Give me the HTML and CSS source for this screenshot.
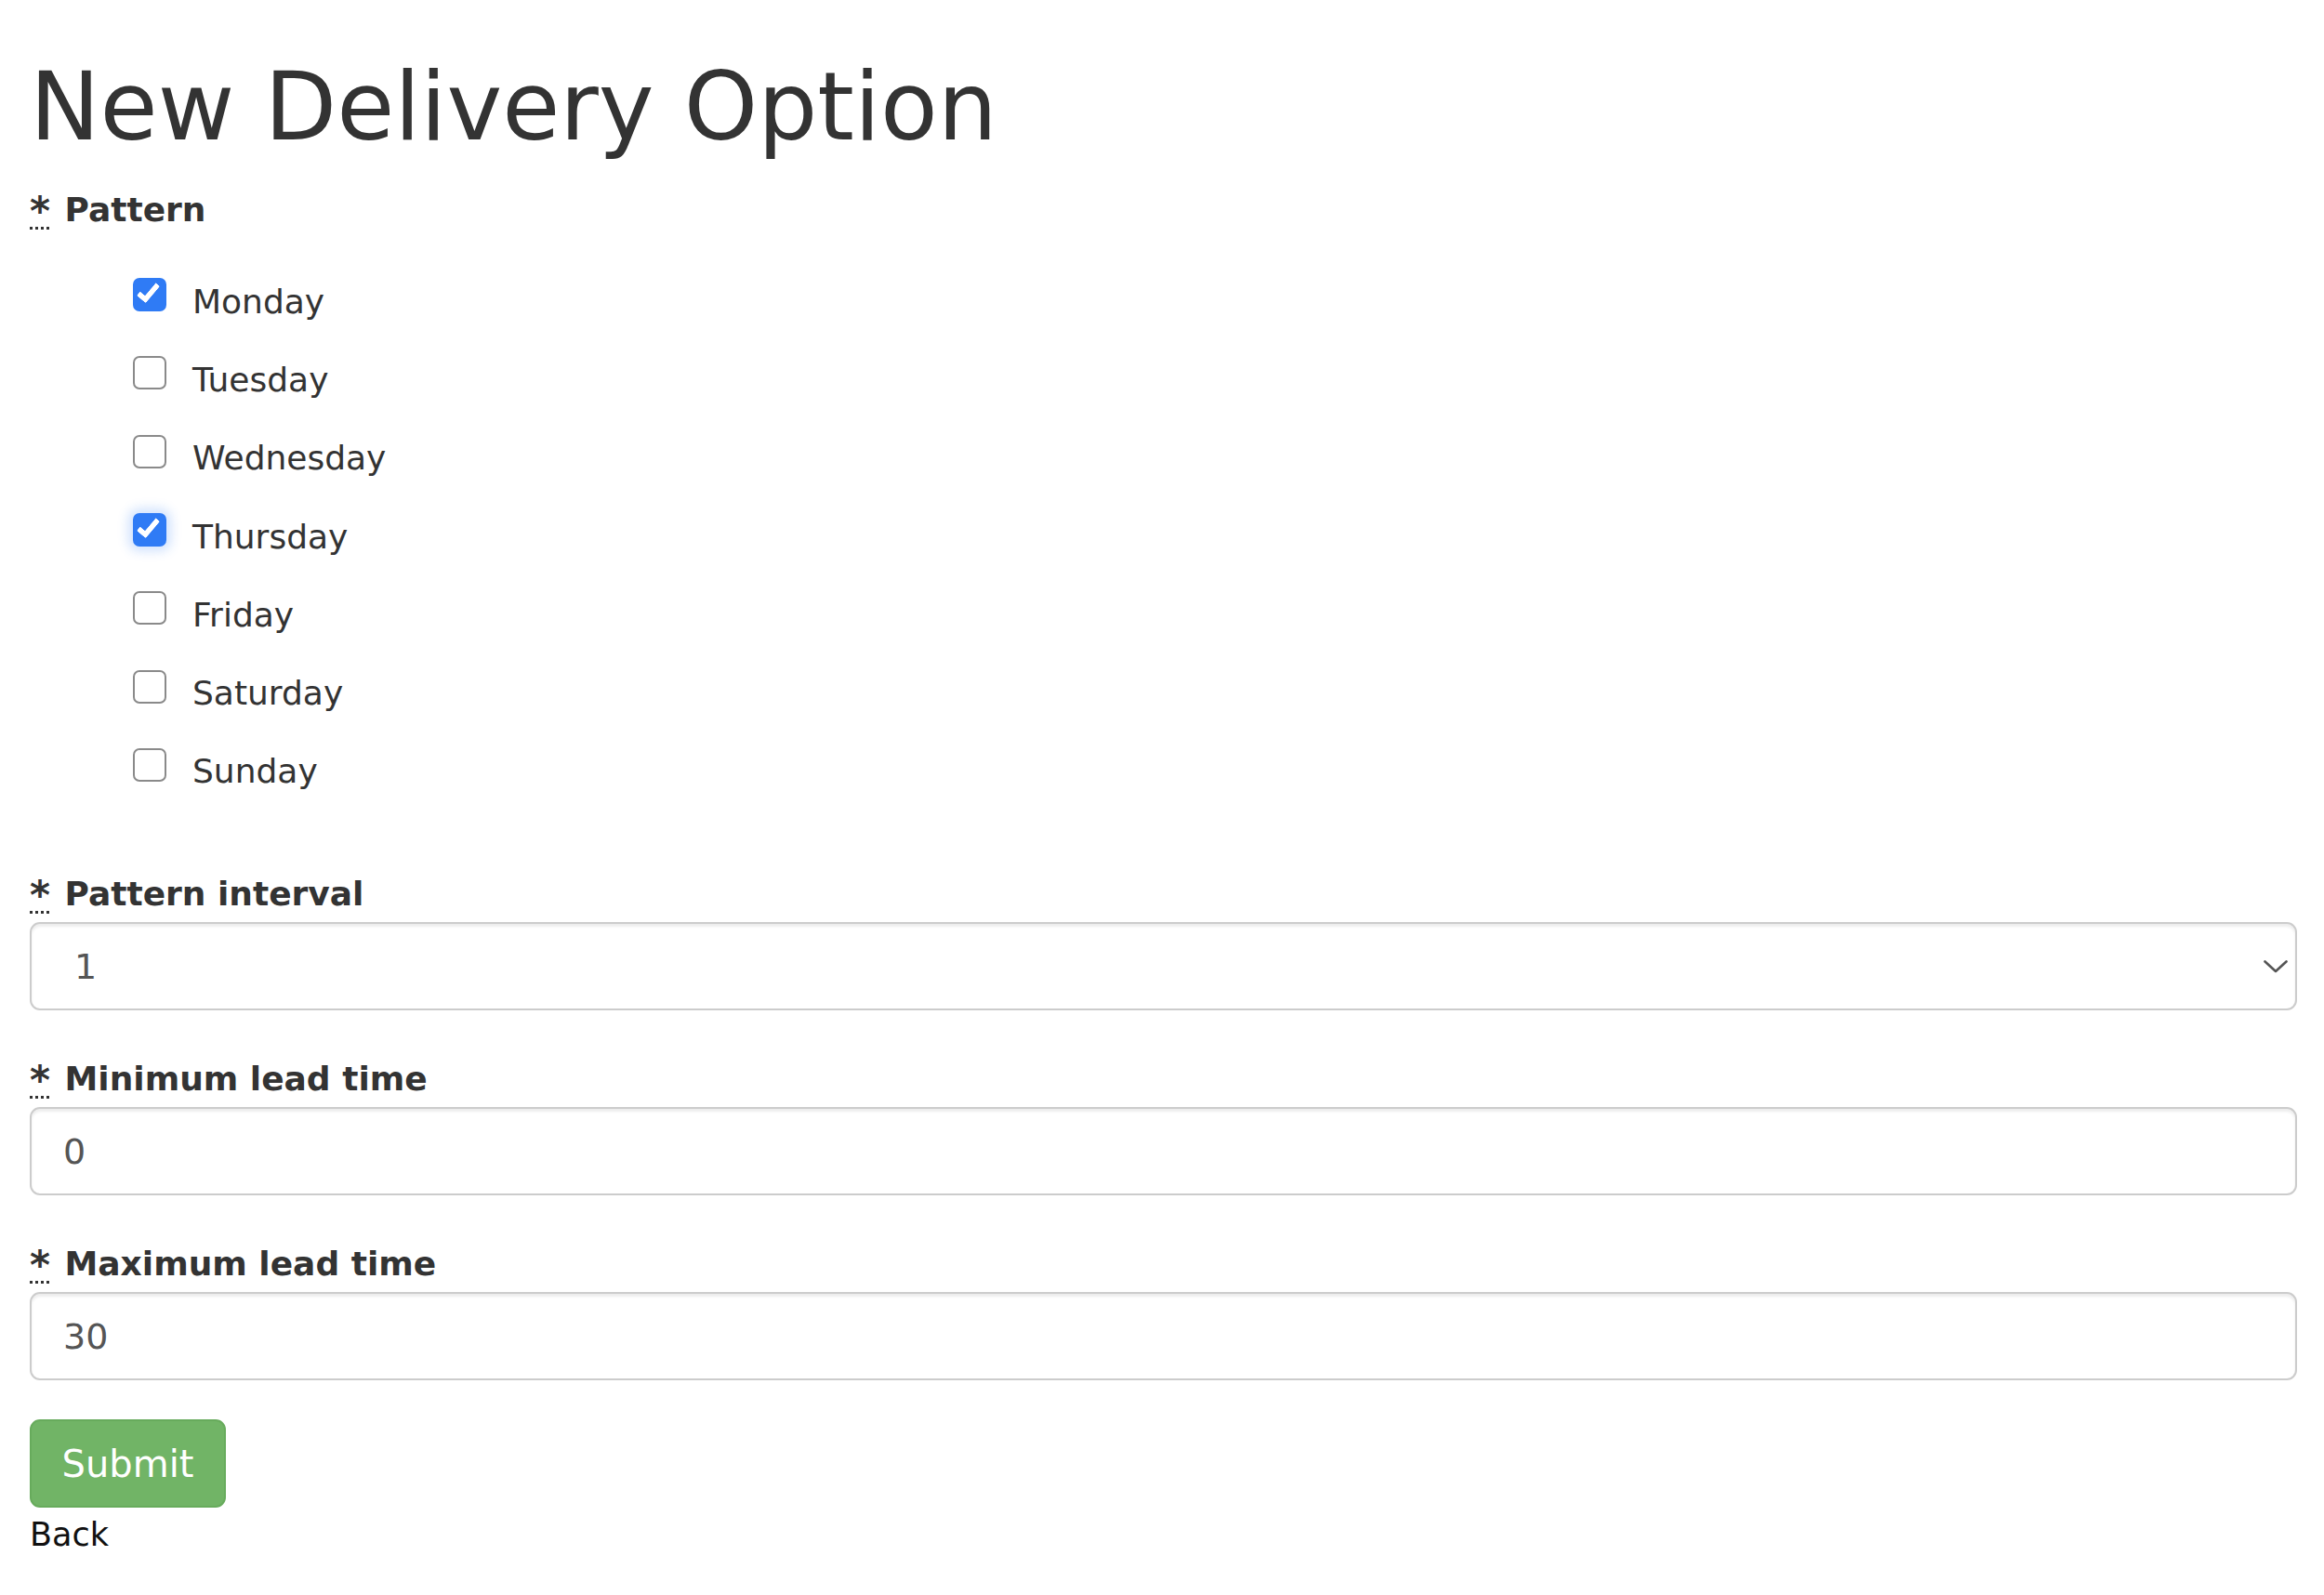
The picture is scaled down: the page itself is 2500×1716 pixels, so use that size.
FILE: index.html
```html
<!DOCTYPE html>
<html>
<head>
  <meta charset="UTF-8">
  <title>New Delivery Option</title>
  <link rel="stylesheet" href="styles.css">
</head>
<body>
  <div class="page">
    <h1>New Delivery Option</h1>

    <form class="delivery-form">
      <div class="field">
        <label class="field-label"><abbr title="required">*</abbr> Pattern</label>
        <ul class="days">
          <li><label class="day"><input type="checkbox" checked><span>Monday</span></label></li>
          <li><label class="day"><input type="checkbox"><span>Tuesday</span></label></li>
          <li><label class="day"><input type="checkbox"><span>Wednesday</span></label></li>
          <li><label class="day"><input type="checkbox" class="focused" checked><span>Thursday</span></label></li>
          <li><label class="day"><input type="checkbox"><span>Friday</span></label></li>
          <li><label class="day"><input type="checkbox"><span>Saturday</span></label></li>
          <li><label class="day"><input type="checkbox"><span>Sunday</span></label></li>
        </ul>
      </div>

      <div class="field field-interval">
        <label class="field-label" for="interval"><abbr title="required">*</abbr> Pattern interval</label>
        <div class="select-wrap">
          <select id="interval" class="control select">
            <option>1</option>
            <option>2</option>
            <option>3</option>
            <option>4</option>
          </select>
          <svg class="chevron" width="26" height="14" viewBox="0 0 26 14">
            <path d="M1.5 1.5 L13 12 L24.5 1.5" fill="none" stroke="#555" stroke-width="2.6" stroke-linecap="round" stroke-linejoin="round"/>
          </svg>
        </div>
      </div>

      <div class="field">
        <label class="field-label" for="minLead"><abbr title="required">*</abbr> Minimum lead time</label>
        <input id="minLead" class="control" type="text" value="0">
      </div>

      <div class="field">
        <label class="field-label" for="maxLead"><abbr title="required">*</abbr> Maximum lead time</label>
        <input id="maxLead" class="control" type="text" value="30">
      </div>

      <button type="submit" class="btn-submit">Submit</button>
    </form>

    <a class="back" href="#">Back</a>
  </div>
</body>
</html>
```

FILE: styles.css
```css
body {
  margin: 0;
  font-family: "DejaVu Sans", Verdana, sans-serif;
  color: #333;
  background: #fff;
}

.page {
  padding: 0 29px 0 32px;
}

h1 {
  margin: 55px 0 29px;
  font-size: 101px;
  line-height: 120px;
  font-weight: normal;
  color: #333;
}

.delivery-form {
  display: flex;
  flex-direction: column;
}

.field {
  display: flex;
  flex-direction: column;
}

.field + .field {
  margin-top: 52px;
}

.field-interval {
  margin-top: 68px !important;
}

.field-label {
  font-size: 36px;
  line-height: 44px;
  font-weight: bold;
  color: #333;
  margin-bottom: 8px;
}

.field-label abbr {
  font-size: 42px;
  line-height: 0;
  vertical-align: -4px;
  text-decoration: underline dotted;
  text-decoration-thickness: 3px;
  text-underline-offset: 2px;
  margin-right: 3px;
  cursor: help;
}

.days {
  list-style: none;
  margin: 26px 0 0;
  padding: 0 0 0 111px;
}

.day {
  display: flex;
  align-items: center;
  height: 84.3px;
  font-size: 36px;
  color: #333;
  cursor: pointer;
}

.day input {
  appearance: none;
  -webkit-appearance: none;
  position: relative;
  width: 36px;
  height: 36px;
  margin: 0 28px 14px 0;
  border: 2px solid #8a8a8a;
  border-radius: 7px;
  background: #fff;
  flex-shrink: 0;
}

.day input:checked {
  background: #2f7bf5;
  border-color: #2f7bf5;
}

.day input:checked::after {
  content: "";
  position: absolute;
  left: 8px;
  top: 0;
  width: 7px;
  height: 18px;
  border: solid #fff;
  border-width: 0 6px 6px 0;
  border-radius: 2px;
  transform: rotate(40deg);
}

.day input.focused {
  box-shadow: 0 0 12px 5px rgba(47, 123, 245, 0.22);
}

.control {
  box-sizing: border-box;
  width: 100%;
  height: 95px;
  padding: 0 34px;
  font-family: "DejaVu Sans", Verdana, sans-serif;
  font-size: 38px;
  color: #555;
  background: #fff;
  border: 2px solid #ccc;
  border-radius: 11px;
  box-shadow: inset 0 3px 3px rgba(0, 0, 0, 0.075);
  outline: none;
}

.select-wrap {
  position: relative;
}

.select {
  appearance: none;
  -webkit-appearance: none;
  padding-left: 46px;
}

.chevron {
  position: absolute;
  right: 10px;
  top: 41px;
  pointer-events: none;
}

.btn-submit {
  align-self: flex-start;
  margin-top: 42px;
  width: 211px;
  height: 95px;
  padding: 0;
  font-family: "DejaVu Sans", Verdana, sans-serif;
  font-size: 40px;
  color: #fff;
  background: #71b466;
  border: 2px solid #67ab5c;
  border-radius: 11px;
  cursor: pointer;
}

.back {
  display: inline-block;
  margin-top: 4px;
  font-size: 35px;
  line-height: 50px;
  color: #111;
  text-decoration: none;
}
```
